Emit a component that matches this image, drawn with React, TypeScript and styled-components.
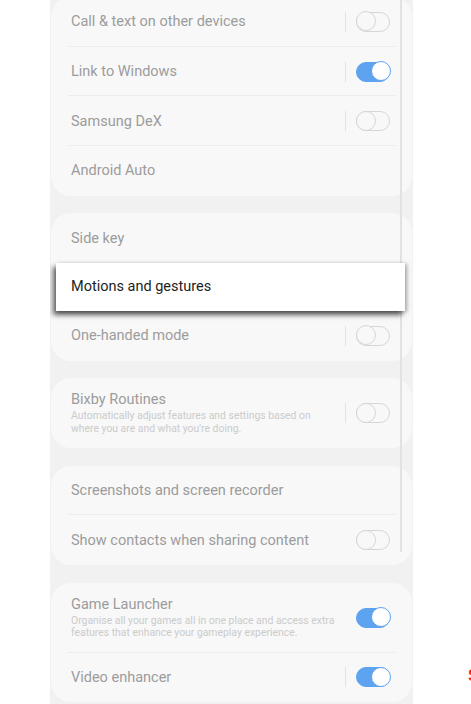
import styled, {createGlobalStyle} from "styled-components";

const GlobalStyle = createGlobalStyle`
    body {
        margin: 0;
        background: #ffffff;
        font-family: Roboto, "Noto Sans", Arial, sans-serif;
    }
`;

const Page = styled.div`
    display: flex;
    flex-direction: row;
    width: 471px;
    height: 704px;
    overflow: hidden;
`;

const Phone = styled.div`
    position: relative;
    flex: 0 0 363px;
    margin-left: 50px;
    height: 704px;
    overflow: hidden;
    background: #f1f1f1;
    display: flex;
    flex-direction: column;
    gap: 17.5px;
    padding: 0 1px;
    box-sizing: border-box;
`;

const Card = styled.div<{ $top?: number }>`
    background: #f8f8f8;
    border-radius: 20px;
    margin-top: ${(p) => p.$top ?? 0}px;
    display: flex;
    flex-direction: column;
    flex-shrink: 0;
`;

const Row = styled.div<{ $tall?: boolean; $divider?: boolean }>`
    position: relative;
    display: flex;
    align-items: center;
    height: ${(p) => (p.$tall ? 70 : 49.7)}px;
    padding: 0 22px 0 20px;
    box-sizing: border-box;
    flex-shrink: 0;

    &::after {
        content: "";
        display: ${(p) => (p.$divider ? "block" : "none")};
        position: absolute;
        left: 17px;
        right: 17px;
        bottom: 0;
        height: 1px;
        background: #ececec;
    }
`;

const Highlight = styled.div`
    position: relative;
    z-index: 2;
    display: flex;
    align-items: center;
    height: 48px;
    margin: 0 7px 0 5px;
    padding-left: 15px;
    background: #ffffff;
    box-shadow: -3px 4px 5px rgba(0, 0, 0, 0.6), 2px 1px 4px rgba(0, 0, 0, 0.3);
`;

const TextBlock = styled.div`
    flex: 1;
    display: flex;
    flex-direction: column;
    gap: 2px;
`;

const Title = styled.div<{ $active?: boolean }>`
    font-size: 14.5px;
    line-height: 17px;
    color: ${(p) => (p.$active ? "#1e1e1e" : "#9c9c9c")};
`;

const Sub = styled.div`
    max-width: 267px;
    font-size: 10.4px;
    line-height: 12.5px;
    color: #cbcbcb;
`;

const Separator = styled.div`
    width: 1px;
    height: 20px;
    background: #e3e3e3;
    margin-right: 10px;
`;

const Track = styled.div<{ $on?: boolean }>`
    position: relative;
    width: 34px;
    height: 20px;
    box-sizing: border-box;
    border-radius: 10px;
    border: 1.5px solid ${(p) => (p.$on ? "#5ea3ef" : "#d6d6d6")};
    background: ${(p) => (p.$on ? "#5ea3ef" : "transparent")};
    flex-shrink: 0;
`;

const Knob = styled.div<{ $on?: boolean }>`
    position: absolute;
    top: -1.5px;
    ${(p) => (p.$on ? "right: -1.5px;" : "left: -1.5px;")}
    width: 20px;
    height: 20px;
    box-sizing: border-box;
    border-radius: 50%;
    border: 1.5px solid ${(p) => (p.$on ? "#5ea3ef" : "#d6d6d6")};
    background: ${(p) => (p.$on ? "#ffffff" : "#f8f8f8")};
`;

const ScrollBar = styled.div`
    position: absolute;
    left: 350px;
    top: 0;
    width: 2px;
    height: 552px;
    background: #e2e2e2;
    z-index: 1;
`;

const Side = styled.div`
    flex: 1;
    display: flex;
    align-items: flex-end;
    padding: 0 0 18px 55px;
`;

const RedMark = styled.span`
    color: #ff1a1a;
    font-family: "Liberation Sans", Arial, sans-serif;
    font-weight: bold;
    font-size: 17px;
`;

function Toggle({on}: { on?: boolean }) {
    return (
        <Track $on={on}>
            <Knob $on={on}/>
        </Track>
    );
}

export default function App() {
    return (
        <Page>
            <GlobalStyle/>
            <Phone>
                <ScrollBar/>
                <Card $top={-3}>
                    <Row $divider>
                        <TextBlock><Title>Call &amp; text on other devices</Title></TextBlock>
                        <Separator/>
                        <Toggle/>
                    </Row>
                    <Row $divider>
                        <TextBlock><Title>Link to Windows</Title></TextBlock>
                        <Separator/>
                        <Toggle on/>
                    </Row>
                    <Row $divider>
                        <TextBlock><Title>Samsung DeX</Title></TextBlock>
                        <Separator/>
                        <Toggle/>
                    </Row>
                    <Row>
                        <TextBlock><Title>Android Auto</Title></TextBlock>
                    </Row>
                </Card>

                <Card>
                    <Row>
                        <TextBlock><Title>Side key</Title></TextBlock>
                    </Row>
                    <Highlight>
                        <Title $active>Motions and gestures</Title>
                    </Highlight>
                    <Row>
                        <TextBlock><Title>One-handed mode</Title></TextBlock>
                        <Separator/>
                        <Toggle/>
                    </Row>
                </Card>

                <Card>
                    <Row $tall>
                        <TextBlock>
                            <Title>Bixby Routines</Title>
                            <Sub>Automatically adjust features and settings based on where you are and what you're doing.</Sub>
                        </TextBlock>
                        <Separator/>
                        <Toggle/>
                    </Row>
                </Card>

                <Card>
                    <Row $divider>
                        <TextBlock><Title>Screenshots and screen recorder</Title></TextBlock>
                    </Row>
                    <Row>
                        <TextBlock><Title>Show contacts when sharing content</Title></TextBlock>
                        <Toggle/>
                    </Row>
                </Card>

                <Card>
                    <Row $tall $divider>
                        <TextBlock>
                            <Title>Game Launcher</Title>
                            <Sub>Organise all your games all in one place and access extra features that enhance your gameplay experience.</Sub>
                        </TextBlock>
                        <Toggle on/>
                    </Row>
                    <Row>
                        <TextBlock><Title>Video enhancer</Title></TextBlock>
                        <Separator/>
                        <Toggle on/>
                    </Row>
                </Card>
            </Phone>
            <Side>
                <RedMark>S</RedMark>
            </Side>
        </Page>
    );
}
